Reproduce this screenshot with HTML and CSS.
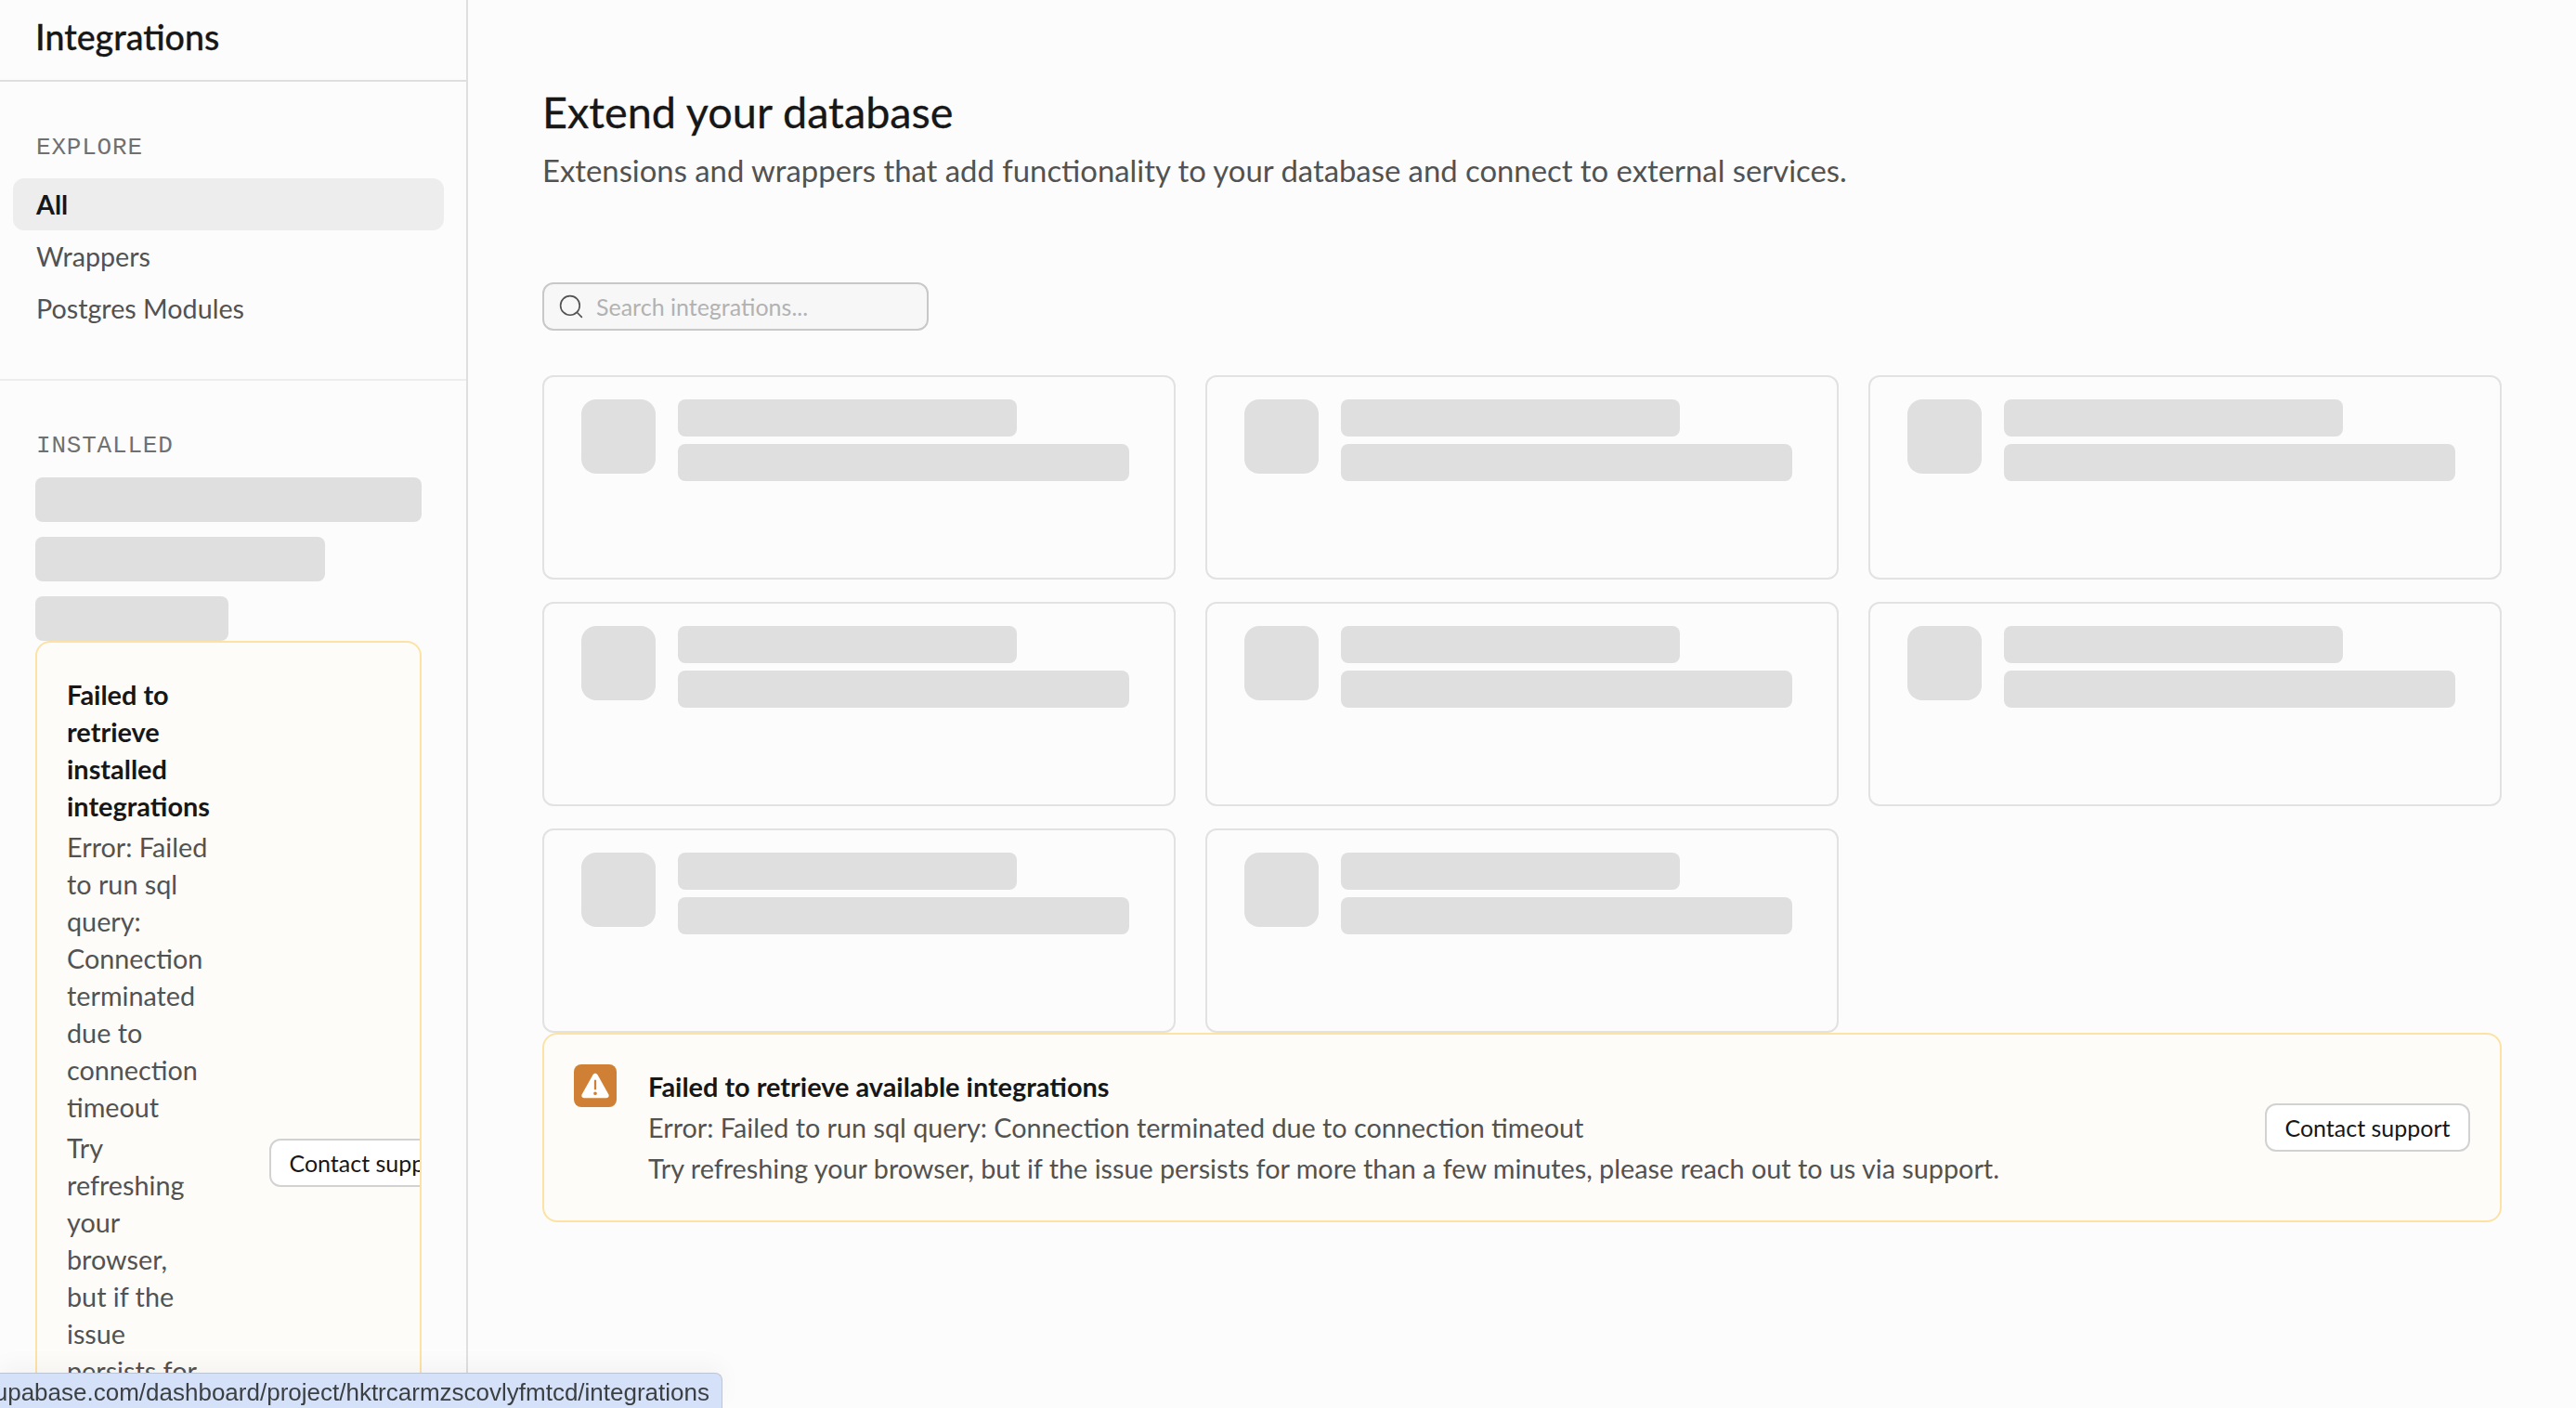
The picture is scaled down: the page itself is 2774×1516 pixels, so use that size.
FILE: index.html
```html
<!DOCTYPE html>
<html lang="en">
<head>
<meta charset="utf-8">
<title>Integrations</title>
<link rel="stylesheet" href="styles.css">
</head>
<body>
<div class="app">
  <aside class="sidebar">
    <header class="side-head"><h2>Integrations</h2></header>
    <section class="side-explore">
      <div class="label">EXPLORE</div>
      <nav class="nav">
        <a class="nav-item active">All</a>
        <a class="nav-item">Wrappers</a>
        <a class="nav-item">Postgres Modules</a>
      </nav>
    </section>
    <section class="side-installed">
      <div class="label">INSTALLED</div>
      <div class="side-skels">
        <div class="skel s-full"></div>
        <div class="skel s-three"></div>
        <div class="skel s-half"></div>
      </div>
      <div class="alert alert-narrow">
        <div class="alert-text narrow">
          <p class="alert-title">Failed to retrieve installed integrations</p>
          <p>Error: Failed to run sql query: Connection terminated due to connection timeout</p>
          <p>Try refreshing your browser, but if the issue persists for more than a few minutes, please reach out to us via support.</p>
        </div>
        <a class="btn">Contact support</a>
      </div>
    </section>
  </aside>
  <main class="main">
    <h1>Extend your database</h1>
    <p class="lead">Extensions and wrappers that add functionality to your database and connect to external services.</p>
    <div class="search">
      <svg class="search-icon" viewBox="0 0 24 24" fill="none" stroke="#525252" stroke-width="1.5" stroke-linecap="round"><circle cx="11" cy="11" r="9.5"/><path d="M18 18 22.500 22.500"/></svg>
      <span>Search integrations...</span>
    </div>
    <div class="grid">
      <div class="card"><div class="skel card-icon"></div><div class="card-bars"><div class="skel bar bar-short"></div><div class="skel bar"></div></div></div>
      <div class="card"><div class="skel card-icon"></div><div class="card-bars"><div class="skel bar bar-short"></div><div class="skel bar"></div></div></div>
      <div class="card"><div class="skel card-icon"></div><div class="card-bars"><div class="skel bar bar-short"></div><div class="skel bar"></div></div></div>
      <div class="card"><div class="skel card-icon"></div><div class="card-bars"><div class="skel bar bar-short"></div><div class="skel bar"></div></div></div>
      <div class="card"><div class="skel card-icon"></div><div class="card-bars"><div class="skel bar bar-short"></div><div class="skel bar"></div></div></div>
      <div class="card"><div class="skel card-icon"></div><div class="card-bars"><div class="skel bar bar-short"></div><div class="skel bar"></div></div></div>
      <div class="card"><div class="skel card-icon"></div><div class="card-bars"><div class="skel bar bar-short"></div><div class="skel bar"></div></div></div>
      <div class="card"><div class="skel card-icon"></div><div class="card-bars"><div class="skel bar bar-short"></div><div class="skel bar"></div></div></div>
    </div>
    <div class="alert">
      <div class="alert-icon">
        <svg viewBox="0 0 24 24" width="34" height="34"><path fill="#fff" fill-rule="evenodd" d="M12 2.600c.7 0 1.300.4 1.700 1l8.400 15c.7 1.300-.1 2.800-1.600 2.800H3.500c-1.500 0-2.300-1.500-1.600-2.800l8.400-15c.4-.6 1-1 1.700-1Zm-.8 4.900v7.500h1.600V7.500Zm.8 9a1.300 1.300 0 1 0 0 2.600 1.300 1.300 0 0 0 0-2.600Z"/></svg>
      </div>
      <div class="alert-text">
        <p class="alert-title">Failed to retrieve available integrations</p>
        <p>Error: Failed to run sql query: Connection terminated due to connection timeout</p>
        <p>Try refreshing your browser, but if the issue persists for more than a few minutes, please reach out to us via support.</p>
      </div>
      <a class="btn">Contact support</a>
    </div>
  </main>
</div>
<div class="status">https://supabase.com/dashboard/project/hktrcarmzscovlyfmtcd/integrations</div>
</body>
</html>
```

FILE: styles.css
```css
* { box-sizing: border-box; }
html, body { margin: 0; height: 100%; overflow: hidden; }
body { background: #fcfcfc; font-family: "Lato", "Liberation Sans", sans-serif; color: #171717; }
p, h1, h2 { margin: 0; font-weight: 400; }
.app { display: flex; height: 100vh; overflow: hidden; }

.sidebar { width: 504px; flex: none; border-right: 2px solid #dfdfdf; display: flex; flex-direction: column; overflow: hidden; }
.side-head { height: 88px; flex: none; border-bottom: 2px solid #dfdfdf; padding: 0 38px; display: flex; align-items: center; }
.side-head h2 { font-size: 37.6px; font-weight: 500; line-height: 44px; position: relative; top: -3px; -webkit-text-stroke: 0.3px #171717; }
.side-explore { flex: none; height: 322px; padding: 55px 24px 0 14px; border-bottom: 2px solid #ededed; }
.label { font-family: "Liberation Mono", monospace; font-size: 26px; line-height: 32px; letter-spacing: 0.8px; color: #707070; }
.side-explore .label { padding-left: 25px; }
.nav { display: flex; flex-direction: column; margin-top: 17px; }
.nav-item { height: 56px; padding: 0 24px 0 25px; display: flex; align-items: center; font-size: 28.7px; color: #525252; border-radius: 12px; }
.nav-item.active { background: #ededed; color: #171717; font-weight: 700; }
.side-installed { flex: none; padding: 54px 48px 0 38px; }
.side-installed .label { padding-left: 1px; }
.side-skels { display: flex; flex-direction: column; gap: 16px; margin-top: 18px; }
.skel { background: #dfdfdf; border-radius: 8px; }
.side-skels .skel { height: 48px; }
.s-full { width: 416px; }
.s-three { width: 312px; }
.s-half { width: 208px; }

.main { flex: 1; min-width: 0; padding: 92px 80px 0; }
h1 { font-size: 46.8px; line-height: 56px; font-weight: 400; -webkit-text-stroke: 0.3px #171717; }
.lead { font-size: 32.83px; line-height: 40px; color: #525252; margin-top: 16px; }
.search { width: 416px; height: 52px; margin-top: 100px; border: 2px solid #c8c8c8; border-radius: 12px; background: #f7f7f7; display: flex; align-items: center; padding: 0 16px; gap: 14px; font-size: 25px; color: #b2b2b2; }
.search-icon { width: 26px; height: 26px; flex: none; }
.grid { display: grid; grid-template-columns: repeat(3, 682px); gap: 24px 32px; margin-top: 48px; }
.card { height: 220px; border: 2px solid #e2e2e2; border-radius: 12px; padding: 24px 48px 24px 40px; display: flex; gap: 24px; align-items: flex-start; }
.card-icon { width: 80px; height: 80px; border-radius: 16px; flex: none; }
.card-bars { flex: 1; display: flex; flex-direction: column; gap: 8px; }
.bar { height: 40px; }
.bar-short { width: 75%; }

.alert { display: flex; align-items: center; gap: 34px; border: 2px solid #fce2a4; border-radius: 16px; background: #fdfcf8; padding: 32px; overflow: hidden; }
.alert > .alert-icon { align-self: flex-start; }
.alert-narrow { width: 416px; gap: 62px; }
.alert-icon { width: 46px; height: 46px; flex: none; border-radius: 8px; background: #cf8034; display: flex; align-items: center; justify-content: center; }
.alert-text { flex: 1; padding: 4px 0; font-size: 28.75px; line-height: 40px; color: #525252; display: flex; flex-direction: column; gap: 4px; }
.alert-text.narrow { flex: none; width: 156px; }
.alert-title { color: #171717; font-weight: 700; font-size: 28.9px; }
.btn { flex: none; height: 52px; width: 221px; display: flex; align-items: center; justify-content: center; border: 2px solid #d2d2d2; border-radius: 12px; background: #fff; font-size: 25px; color: #171717; }

.status { position: fixed; left: 0; bottom: 0; width: 778px; height: 38px; background: #d5e1f9; border: 1px solid #bcc5d6; border-left: 0; border-bottom: 0; border-top-right-radius: 8px; display: flex; justify-content: flex-end; align-items: center; padding: 3px 13px 0 0; white-space: nowrap; overflow: hidden; font-family: "Liberation Sans", sans-serif; font-size: 26px; color: #3c4043; box-shadow: 0 -8px 24px rgba(0,0,0,.04); }
```
